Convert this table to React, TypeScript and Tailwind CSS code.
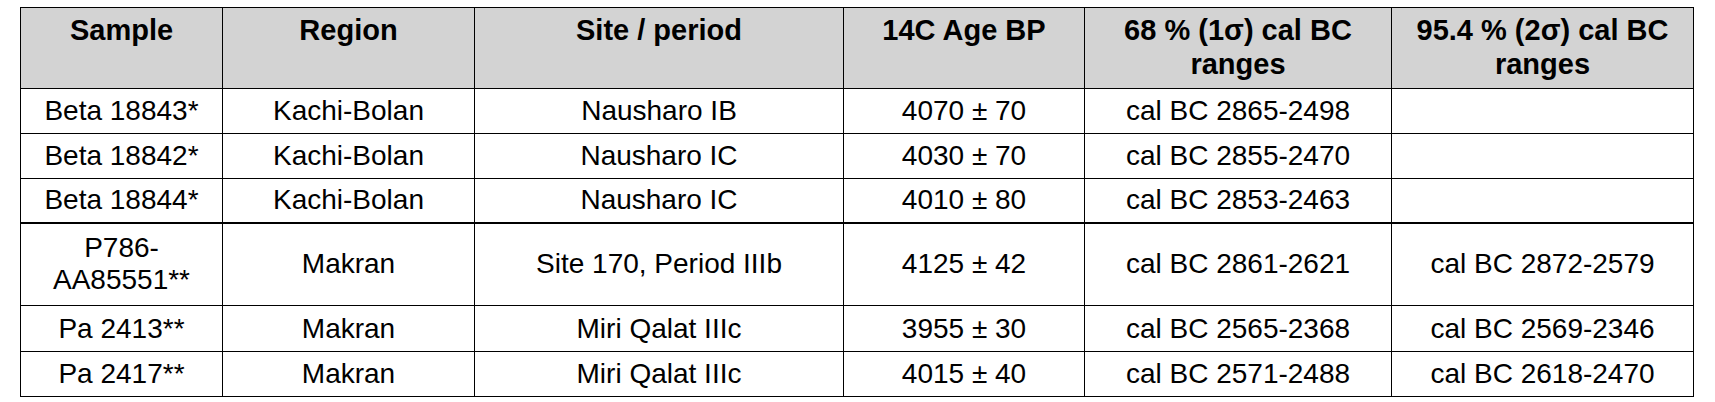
import React from "react";

const rows: { cells: string[]; h: string; thick?: boolean }[] = [
  { cells: ["Beta 18843*", "Kachi-Bolan", "Nausharo IB", "4070 ± 70", "cal BC 2865-2498", ""], h: "h-[45px]" },
  { cells: ["Beta 18842*", "Kachi-Bolan", "Nausharo IC", "4030 ± 70", "cal BC 2855-2470", ""], h: "h-[45px]" },
  { cells: ["Beta 18844*", "Kachi-Bolan", "Nausharo IC", "4010 ± 80", "cal BC 2853-2463", ""], h: "h-[44px]", thick: true },
  { cells: ["P786-AA85551**", "Makran", "Site 170, Period IIIb", "4125 ± 42", "cal BC 2861-2621", "cal BC 2872-2579"], h: "h-[83px]" },
  { cells: ["Pa 2413**", "Makran", "Miri Qalat IIIc", "3955 ± 30", "cal BC 2565-2368", "cal BC 2569-2346"], h: "h-[46px]" },
  { cells: ["Pa 2417**", "Makran", "Miri Qalat IIIc", "4015 ± 40", "cal BC 2571-2488", "cal BC 2618-2470"], h: "h-[45px]" },
];

const headers = [
  "Sample",
  "Region",
  "Site / period",
  "14C Age BP",
  "68 % (1σ) cal BC ranges",
  "95.4 % (2σ) cal BC ranges",
];

export default function App() {
  return (
    <div className="bg-white w-[1715px] h-[402px] pt-[7px] pl-[20px] font-['Liberation_Sans',Arial,sans-serif] text-black">
      <table className="table-fixed border-collapse w-[1673px] text-[28px] leading-[32px]">
        <colgroup>
          <col className="w-[202px]" />
          <col className="w-[252px]" />
          <col className="w-[369px]" />
          <col className="w-[241px]" />
          <col className="w-[307px]" />
          <col className="w-[302px]" />
        </colgroup>
        <thead>
          <tr className="h-[81px] bg-[#d3d3d3]">
            {headers.map((h) => (
              <th
                key={h}
                className="border border-black align-top text-center font-bold text-[29px] leading-[34px] px-[6px] pt-[5px] pb-0"
              >
                {h}
              </th>
            ))}
          </tr>
        </thead>
        <tbody>
          {rows.map((r, i) => (
            <tr key={i} className={r.h}>
              {r.cells.map((c, j) => (
                <td
                  key={j}
                  className={`border border-black align-middle text-center px-[6px] py-0 ${
                    r.thick ? "border-b-2" : ""
                  }`}
                >
                  {c === "P786-AA85551**" ? (
                    <>
                      P786-
                      <br />
                      AA85551**
                    </>
                  ) : (
                    c
                  )}
                </td>
              ))}
            </tr>
          ))}
        </tbody>
      </table>
    </div>
  );
}
